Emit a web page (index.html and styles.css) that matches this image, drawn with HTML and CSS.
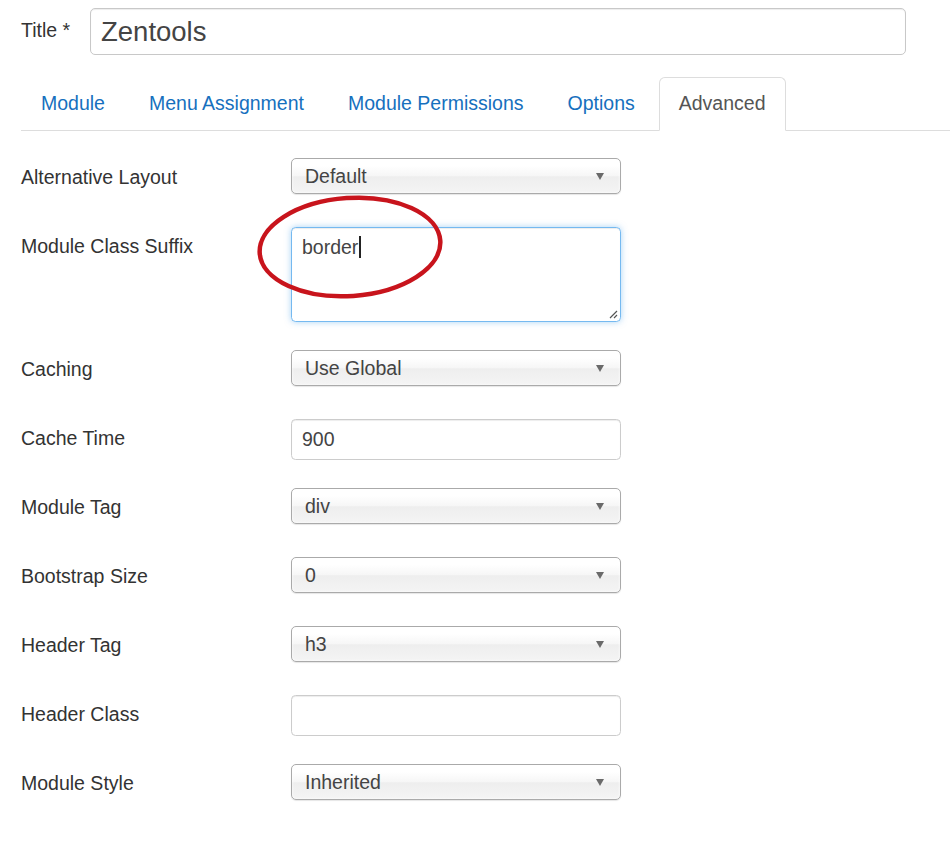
FILE: index.html
```html
<!DOCTYPE html>
<html lang="en">
<head>
<meta charset="utf-8">
<title>Module - Advanced</title>
<link rel="stylesheet" href="styles.css">
</head>
<body>
<div class="page">
  <div class="title-row">
    <label class="title-label" for="title">Title *</label>
    <input id="title" class="title-input" type="text" value="Zentools">
  </div>

  <ul class="tabs">
    <li><a href="#">Module</a></li>
    <li><a href="#">Menu Assignment</a></li>
    <li><a href="#">Module Permissions</a></li>
    <li><a href="#">Options</a></li>
    <li class="active"><a href="#">Advanced</a></li>
  </ul>

  <div class="form">
    <div class="row">
      <label class="lbl">Alternative Layout</label>
      <div class="ctl"><div class="select"><span>Default</span><i class="arrow"></i></div></div>
    </div>
    <div class="row">
      <label class="lbl">Module Class Suffix</label>
      <div class="ctl">
        <div class="textarea"><span>border</span><span class="caret"></span>
          <svg class="grip" width="10" height="10" viewBox="0 0 10 10"><path d="M9 2 L2 9 M9 6 L6 9" stroke="#555" stroke-width="1.2" fill="none"/></svg>
        </div>
      </div>
    </div>
    <div class="row">
      <label class="lbl">Caching</label>
      <div class="ctl"><div class="select"><span>Use Global</span><i class="arrow"></i></div></div>
    </div>
    <div class="row">
      <label class="lbl">Cache Time</label>
      <div class="ctl"><input class="input" type="text" value="900"></div>
    </div>
    <div class="row">
      <label class="lbl">Module Tag</label>
      <div class="ctl"><div class="select"><span>div</span><i class="arrow"></i></div></div>
    </div>
    <div class="row">
      <label class="lbl">Bootstrap Size</label>
      <div class="ctl"><div class="select"><span>0</span><i class="arrow"></i></div></div>
    </div>
    <div class="row">
      <label class="lbl">Header Tag</label>
      <div class="ctl"><div class="select"><span>h3</span><i class="arrow"></i></div></div>
    </div>
    <div class="row">
      <label class="lbl">Header Class</label>
      <div class="ctl"><input class="input" type="text" value=""></div>
    </div>
    <div class="row">
      <label class="lbl">Module Style</label>
      <div class="ctl"><div class="select"><span>Inherited</span><i class="arrow"></i></div></div>
    </div>

    <svg class="circle" width="220" height="130" viewBox="0 0 220 130">
      <ellipse cx="110" cy="63" rx="90.5" ry="49" transform="rotate(-4 110 63)" fill="none" stroke="#c8141c" stroke-width="4.5"/>
    </svg>
  </div>
</div>
</body>
</html>
```

FILE: styles.css
```css
html, body {
  margin: 0;
  padding: 0;
  background: #fff;
}

body {
  font-family: "Liberation Sans", Arial, sans-serif;
  font-size: 19.5px;
  color: #333;
}

.page {
  padding: 8px 0 0 21px;
}

.title-row {
  display: flex;
  align-items: center;
}

.title-label {
  width: 69px;
  flex: none;
  white-space: nowrap;
  color: #333;
  font-size: 19.5px;
  margin-top: -3px;
}

.title-input {
  width: 816px;
  height: 47px;
  box-sizing: border-box;
  border: 1px solid #c8c8c8;
  border-radius: 5px;
  padding: 0 10px;
  font-family: "Liberation Sans", Arial, sans-serif;
  font-size: 27.5px;
  color: #444;
  box-shadow: inset 0 1px 1px rgba(0,0,0,0.075);
  outline: none;
}

.tabs {
  display: flex;
  list-style: none;
  margin: 22px 0 27px 0;
  padding: 0;
  border-bottom: 1px solid #ddd;
}

.tabs li {
  margin-right: 4px;
  margin-bottom: -1px;
}

.tabs a {
  display: block;
  padding: 12px 19px 13px;
  line-height: 27px;
  border: 1px solid transparent;
  border-radius: 6px 6px 0 0;
  color: #1670be;
  text-decoration: none;
}

.tabs .active a {
  border-color: #ddd;
  border-bottom-color: transparent;
  background: #fff;
  color: #555;
}

.form {
  position: relative;
}

.row {
  display: flex;
  margin-bottom: 28px;
}

.lbl {
  width: 270px;
  flex: none;
  padding-top: 6px;
  line-height: 27px;
  color: #333;
}

.ctl {
  min-height: 41px;
}

.select {
  width: 330px;
  height: 36px;
  box-sizing: border-box;
  border: 1px solid #aaa;
  border-radius: 5px;
  padding: 0 16px 0 13px;
  display: flex;
  align-items: center;
  justify-content: space-between;
  color: #444;
  background: linear-gradient(to bottom, #fff 20%, #f6f6f6 50%, #eee 52%, #f4f4f4 100%);
  box-shadow: inset 0 0 3px #fff, 0 1px 1px rgba(0,0,0,0.1);
}

.arrow {
  width: 0;
  height: 0;
  border-left: 4px solid transparent;
  border-right: 4px solid transparent;
  border-top: 7px solid #6a6a6a;
}

.input {
  width: 330px;
  height: 41px;
  box-sizing: border-box;
  border: 1px solid #ccc;
  border-radius: 4.5px;
  padding: 0 10px;
  font-family: "Liberation Sans", Arial, sans-serif;
  font-size: 19.5px;
  color: #444;
  box-shadow: inset 0 1px 1px rgba(0,0,0,0.075);
  outline: none;
}

.textarea {
  position: relative;
  width: 330px;
  height: 95px;
  box-sizing: border-box;
  border: 1px solid rgba(82,168,236,0.8);
  border-radius: 4.5px;
  padding: 6px 10px;
  line-height: 27px;
  color: #444;
  box-shadow: inset 0 1px 1px rgba(0,0,0,0.075), 0 0 6px rgba(82,168,236,0.5);
}

.caret {
  display: inline-block;
  width: 1.5px;
  height: 22px;
  background: #222;
  vertical-align: -4px;
  margin-left: 1px;
}

.grip {
  position: absolute;
  right: 2px;
  bottom: 2px;
}

.circle {
  position: absolute;
  left: 219px;
  top: 26px;
}
```
